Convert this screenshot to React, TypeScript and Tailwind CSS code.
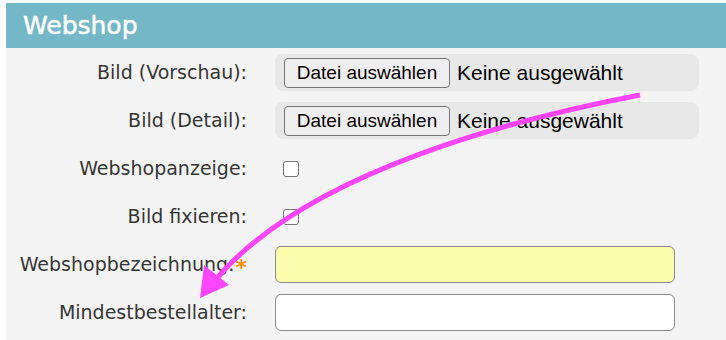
import React from 'react';

const labelFont = { fontFamily: '"DejaVu Sans", Verdana, sans-serif' };

function Row({ label, required, children }: { label: string; required?: boolean; children: React.ReactNode }) {
  return (
    <div className="flex h-[37px] items-center">
      <div className="w-[241px] shrink-0 text-right text-[19px] leading-[23px] text-[#363636]" style={labelFont}>
        {label}
        {required && <span className="relative top-[4px] ml-[1px] text-[22px] leading-none font-bold text-[#ff9500]">*</span>}
      </div>
      <div className="ml-[28px] flex h-full items-center">{children}</div>
    </div>
  );
}

function FileInput() {
  return (
    <div className="flex h-[37px] w-[424px] items-center rounded-[8px] bg-[#e8e8e8] pl-[9px] font-['Liberation_Sans',Arial,sans-serif]">
      <button className="h-[30px] w-[166px] rounded-[4px] border border-[#767676] bg-[#efefef] text-[19px] text-black">
        Datei auswählen
      </button>
      <span className="ml-[7px] text-[21px] text-black">Keine ausgewählt</span>
    </div>
  );
}

function Checkbox() {
  return <span className="ml-[8px] block h-[16px] w-[16px] rounded-[3px] border-[1.5px] border-[#767676] bg-white" />;
}

export default function App() {
  return (
    <div className="relative h-[340px] w-[726px] overflow-hidden bg-white pl-[6px] pt-[3px]">
      <div className="flex h-[337px] flex-col">
        <div className="flex h-[45px] shrink-0 items-center bg-[#74b8c7] pl-[17px]">
          <h2
            className="text-[25px] leading-none text-white [-webkit-text-stroke:0.5px_white]"
            style={labelFont}
          >
            Webshop
          </h2>
        </div>
        <div className="flex flex-1 flex-col gap-[11px] bg-[#f4f4f4] pt-[6px]">
          <Row label="Bild (Vorschau):">
            <FileInput />
          </Row>
          <Row label="Bild (Detail):">
            <FileInput />
          </Row>
          <Row label="Webshopanzeige:">
            <Checkbox />
          </Row>
          <Row label="Bild fixieren:">
            <Checkbox />
          </Row>
          <Row label="Webshopbezeichnung:" required>
            <div className="h-[37px] w-[400px] rounded-[6px] border border-[#8c8c8c] bg-[#fdfdae]" />
          </Row>
          <Row label="Mindestbestellalter:">
            <div className="h-[37px] w-[400px] rounded-[6px] border border-[#8c8c8c] bg-white" />
          </Row>
        </div>
      </div>

      {/* annotation arrow */}
      <svg className="pointer-events-none absolute left-0 top-0" width="726" height="340">
        <path d="M640 95 C 520 118, 310 170, 217 278" fill="none" stroke="#ff45ff" strokeWidth="5" />
        <polygon points="200,298 204,265 229,285" fill="#ff45ff" />
      </svg>
    </div>
  );
}
